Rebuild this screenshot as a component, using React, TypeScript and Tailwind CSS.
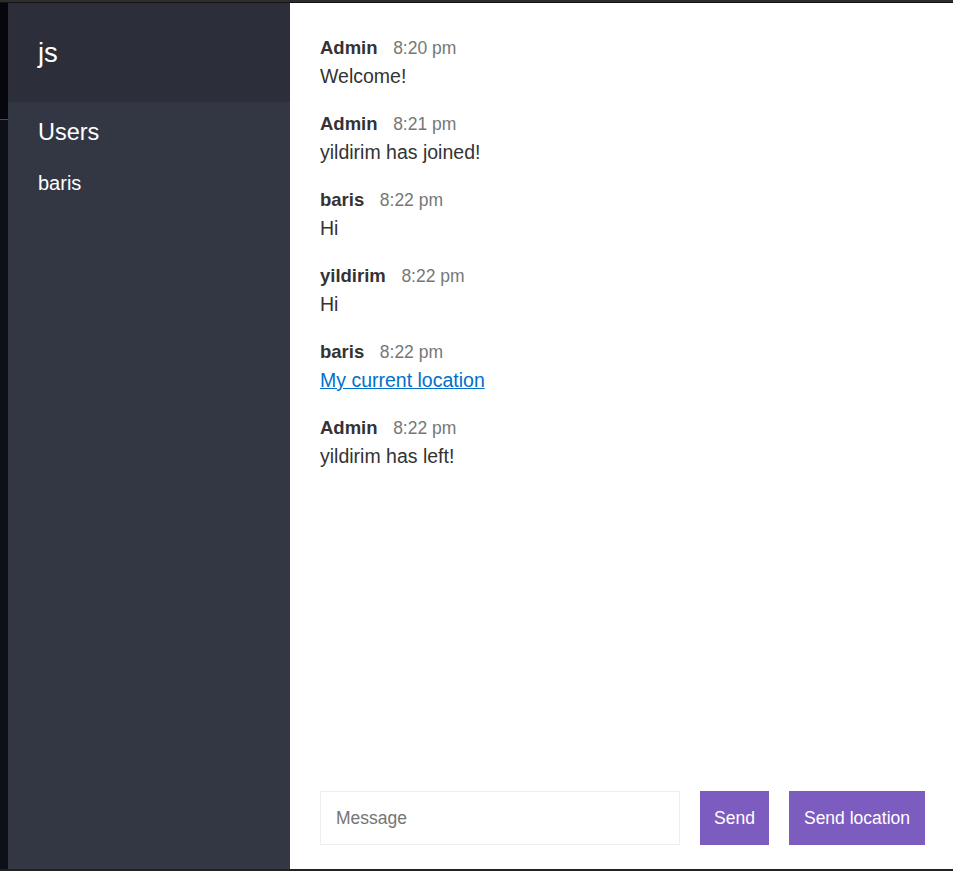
import React from "react";

type Message = {
  name: string;
  time: string;
  text: string;
  url?: string;
};

const messages: Message[] = [
  { name: "Admin", time: "8:20 pm", text: "Welcome!" },
  { name: "Admin", time: "8:21 pm", text: "yildirim has joined!" },
  { name: "baris", time: "8:22 pm", text: "Hi" },
  { name: "yildirim", time: "8:22 pm", text: "Hi" },
  {
    name: "baris",
    time: "8:22 pm",
    text: "My current location",
    url: "#",
  },
  { name: "Admin", time: "8:22 pm", text: "yildirim has left!" },
];

const users = ["baris"];

const MessageItem = ({ message }: { message: Message }) => {
  return (
    <div className="mb-[19px]">
      <p className="leading-[29px] text-[20px]">
        <span className="mr-[10px] text-[18.5px] font-bold text-[#333]">
          {message.name}
        </span>{" "}
        <span className="text-[17.5px] text-[#777]">{message.time}</span>
      </p>
      <p className="text-[19.5px] leading-[27px] text-[#333]">
        {message.url ? (
          <a href={message.url} className="text-[#0070cc] underline">
            {message.text}
          </a>
        ) : (
          message.text
        )}
      </p>
    </div>
  );
};

const Sidebar = () => {
  return (
    <div className="flex w-[282px] shrink-0 flex-col bg-[#333744] text-white">
      <h2 className="h-[99px] bg-[#2c2f3a] px-[30px] pt-[32px] text-[27.5px] font-normal leading-[1.3]">
        js
      </h2>
      <h3 className="mb-[5px] px-[30px] pt-[15px] text-[23.5px] font-medium leading-[1.3]">
        Users
      </h3>
      <ul className="px-[30px] pt-[17px]">
        {users.map((user) => (
          <li key={user} className="text-[20px] leading-[26px]">
            {user}
          </li>
        ))}
      </ul>
    </div>
  );
};

const Compose = () => {
  return (
    <div className="flex shrink-0 items-stretch pb-[24px] pl-[30px] pr-[28px]">
      <form className="mr-[20px] flex flex-1" onSubmit={(e) => e.preventDefault()}>
        <input
          placeholder="Message"
          className="mr-[20px] h-[54px] w-full flex-1 border border-[#eeeeee] bg-white px-[15px] text-[17.5px] text-[#333] outline-none placeholder:text-[#757575]"
        />
        <button className="h-[54px] w-[69px] bg-[#7c5cbf] text-[17.5px] text-white">
          Send
        </button>
      </form>
      <button className="h-[54px] w-[136px] bg-[#7c5cbf] text-[17.5px] text-white">
        Send location
      </button>
    </div>
  );
};

export default function App() {
  return (
    <div
      className="flex h-[871px] w-full flex-col overflow-hidden bg-[#111]"
      style={{ fontFamily: '"Liberation Sans", Arial, sans-serif' }}
    >
      <div className="h-[2px] shrink-0 bg-[#2d2d2d]" />
      <div className="h-[1px] shrink-0 bg-[#141414]" />
      <div className="flex min-h-0 flex-1">
        <div className="flex w-[8px] shrink-0 flex-col">
          <div className="h-[116px] bg-[#05070c]" />
          <div className="h-[1px] bg-[#4a4d55]" />
          <div className="flex-1 bg-[#0d1017]" />
        </div>
        <Sidebar />
        <div className="flex min-w-0 flex-1 flex-col bg-white">
          <div className="flex-1 overflow-hidden px-[30px] pt-[30px]">
            {messages.map((message, i) => (
              <MessageItem key={i} message={message} />
            ))}
          </div>
          <Compose />
        </div>
      </div>
      <div className="h-[2px] shrink-0 bg-[#222]" />
    </div>
  );
}
